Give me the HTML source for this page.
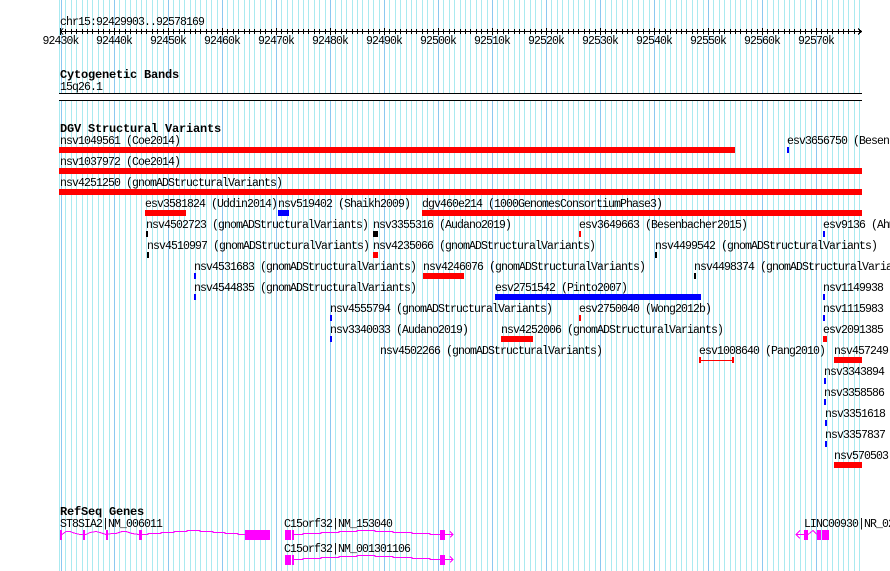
<!DOCTYPE html>
<html><head><meta charset="utf-8"><style>
html,body{margin:0;padding:0;background:#fff;width:890px;height:571px;overflow:hidden}
svg{display:block}
text{font-family:"Liberation Mono",monospace;font-size:11.5px;letter-spacing:-.9px;fill:#000;white-space:pre}
.b{font-weight:bold;font-size:12px;letter-spacing:-.2px}
.r{fill:#f00}.u{fill:#00f}.k{fill:#000}.m{fill:#f0f}
.i{fill:none;stroke:#f0f;stroke-width:1}
</style></head><body>
<svg width="890" height="571" viewBox="0 0 890 571" shape-rendering="crispEdges">
<defs>
<pattern id="g" x="60" y="0" width="54" height="10" patternUnits="userSpaceOnUse">
<rect x="0" width="1" height="10" fill="#8cc8f0"/><rect x="5" width="1" height="10" fill="#aaeaf0"/><rect x="11" width="1" height="10" fill="#aaeaf0"/><rect x="16" width="1" height="10" fill="#aaeaf0"/><rect x="22" width="1" height="10" fill="#aaeaf0"/><rect x="27" width="1" height="10" fill="#aaeaf0"/><rect x="32" width="1" height="10" fill="#aaeaf0"/><rect x="38" width="1" height="10" fill="#aaeaf0"/><rect x="43" width="1" height="10" fill="#aaeaf0"/><rect x="49" width="1" height="10" fill="#aaeaf0"/>
</pattern>
<pattern id="t" x="60" y="28" width="54" height="7" patternUnits="userSpaceOnUse">
<rect x="0" y="0" width="1" height="7" fill="#000"/><rect x="5" y="1" width="1" height="5" fill="#000"/><rect x="11" y="1" width="1" height="5" fill="#000"/><rect x="16" y="1" width="1" height="5" fill="#000"/><rect x="22" y="1" width="1" height="5" fill="#000"/><rect x="27" y="1" width="1" height="5" fill="#000"/><rect x="32" y="1" width="1" height="5" fill="#000"/><rect x="38" y="1" width="1" height="5" fill="#000"/><rect x="43" y="1" width="1" height="5" fill="#000"/><rect x="49" y="1" width="1" height="5" fill="#000"/>
</pattern>
</defs>
<rect x="60" y="0" width="801" height="94" fill="url(#g)"/>
<rect x="60" y="101" width="801" height="470" fill="url(#g)"/>
<rect x="59" y="0" width="3" height="94" fill="#fff"/><rect x="59" y="101" width="3" height="470" fill="#fff"/>
<rect x="59" y="0" width="1" height="94" fill="#aaeaf0"/><rect x="59" y="101" width="1" height="470" fill="#aaeaf0"/>
<rect x="61" y="0" width="1" height="94" fill="#8cc8f0"/><rect x="61" y="101" width="1" height="470" fill="#8cc8f0"/>

<text x="60" y="25">chr15:92429903..92578169</text>
<rect x="60" y="31" width="801" height="1" class="k"/>
<rect x="60" y="28" width="800" height="7" fill="url(#t)"/>
<polyline points="63,28.5 60.5,31.5 63,34.5" fill="none" stroke="#000"/>
<polyline points="858,28.5 861.5,31.5 858,34.5" fill="none" stroke="#000"/>
<text x="42.5" y="44">92430k</text><text x="96" y="44">92440k</text><text x="150" y="44">92450k</text><text x="204" y="44">92460k</text><text x="258" y="44">92470k</text><text x="312" y="44">92480k</text><text x="366" y="44">92490k</text><text x="420" y="44">92500k</text><text x="474" y="44">92510k</text><text x="528" y="44">92520k</text><text x="582" y="44">92530k</text><text x="636" y="44">92540k</text><text x="690" y="44">92550k</text><text x="744" y="44">92560k</text><text x="798" y="44">92570k</text>

<text class="b" x="60" y="78">Cytogenetic Bands</text>
<text x="60" y="90">15q26.1</text>
<rect x="59" y="93" width="803" height="1" class="k"/>
<rect x="59" y="100" width="803" height="1" class="k"/>

<text class="b" x="60" y="132">DGV Structural Variants</text>
<text x="60" y="144">nsv1049561 (Coe2014)</text><rect x="59" y="147" width="676" height="6" class="r"/>
<text x="787" y="144">esv3656750 (Besenbacher2015)</text><rect x="787" y="147" width="2" height="6" class="u"/>
<text x="60" y="165">nsv1037972 (Coe2014)</text><rect x="59" y="168" width="803" height="6" class="r"/>
<text x="60" y="186">nsv4251250 (gnomADStructuralVariants)</text><rect x="59" y="189" width="803" height="6" class="r"/>

<text x="145" y="207">esv3581824 (Uddin2014)</text><rect x="145" y="210" width="41" height="6" class="r"/>
<text x="278" y="207">nsv519402 (Shaikh2009)</text><rect x="278" y="210" width="11" height="6" class="u"/>
<text x="422" y="207">dgv460e214 (1000GenomesConsortiumPhase3)</text><rect x="422" y="210" width="440" height="6" class="r"/>

<text x="146" y="228">nsv4502723 (gnomADStructuralVariants)</text><rect x="146" y="231" width="2" height="6" class="k"/>
<text x="373" y="228">nsv3355316 (Audano2019)</text><rect x="373" y="231" width="5" height="6" class="k"/>
<text x="579" y="228">esv3649663 (Besenbacher2015)</text><rect x="579" y="231" width="2" height="6" class="r"/>
<text x="823" y="228">esv9136 (Ahmed2013)</text><rect x="823" y="231" width="2" height="6" class="u"/>

<text x="147" y="249">nsv4510997 (gnomADStructuralVariants)</text><rect x="147" y="252" width="2" height="6" class="k"/>
<text x="373" y="249">nsv4235066 (gnomADStructuralVariants)</text><rect x="373" y="252" width="5" height="6" class="r"/>
<text x="655" y="249">nsv4499542 (gnomADStructuralVariants)</text><rect x="655" y="252" width="2" height="6" class="k"/>

<text x="194" y="270">nsv4531683 (gnomADStructuralVariants)</text><rect x="194" y="273" width="2" height="6" class="u"/>
<text x="423" y="270">nsv4246076 (gnomADStructuralVariants)</text><rect x="423" y="273" width="41" height="6" class="r"/>
<text x="694" y="270">nsv4498374 (gnomADStructuralVariants)</text><rect x="694" y="273" width="2" height="6" class="k"/>

<text x="194" y="291">nsv4544835 (gnomADStructuralVariants)</text><rect x="194" y="294" width="2" height="6" class="u"/>
<text x="495" y="291">esv2751542 (Pinto2007)</text><rect x="495" y="294" width="206" height="6" class="u"/>
<text x="823" y="291">nsv1149938</text><rect x="823" y="294" width="2" height="6" class="u"/>

<text x="330" y="312">nsv4555794 (gnomADStructuralVariants)</text><rect x="330" y="315" width="2" height="6" class="u"/>
<text x="579" y="312">esv2750040 (Wong2012b)</text><rect x="579" y="315" width="2" height="6" class="r"/>
<text x="823" y="312">nsv1115983</text><rect x="823" y="315" width="2" height="6" class="u"/>

<text x="330" y="333">nsv3340033 (Audano2019)</text><rect x="330" y="336" width="2" height="6" class="u"/>
<text x="501" y="333">nsv4252006 (gnomADStructuralVariants)</text><rect x="501" y="336" width="32" height="6" class="r"/>
<text x="823" y="333">esv2091385</text><rect x="823" y="336" width="4" height="6" class="r"/>

<text x="380" y="354">nsv4502266 (gnomADStructuralVariants)</text>
<text x="699" y="354">esv1008640 (Pang2010)</text><rect x="699" y="357" width="2" height="6" class="r"/><rect x="732" y="357" width="2" height="6" class="r"/><rect x="699" y="360" width="35" height="1" class="r"/>
<text x="834" y="354">nsv457249</text><rect x="834" y="357" width="28" height="6" class="r"/>
<text x="824" y="375">nsv3343894</text><rect x="824" y="378" width="2" height="6" class="u"/>
<text x="824" y="396">nsv3358586</text><rect x="824" y="399" width="2" height="6" class="u"/>
<text x="825" y="417">nsv3351618</text><rect x="825" y="420" width="2" height="6" class="u"/>
<text x="825" y="438">nsv3357837</text><rect x="825" y="441" width="2" height="6" class="u"/>
<text x="834" y="459">nsv570503</text><rect x="834" y="462" width="28" height="6" class="r"/>

<text class="b" x="60" y="515">RefSeq Genes</text>
<text x="60" y="527">ST8SIA2|NM_006011</text>
<path class="i" d="M60 534.5H62L66 531.5H70L74 533L80 534.5H86L90 532.5L96 531.5L100 532.5L106 534.5L112 533.5H116L122 531.5H126L132 533.5L139 534.5H148V533.5H161V532.5H174V531.5H187V530.5H200V531.5H213V532.5H225V533.5H238V534.5H245"/>
<rect x="60" y="530" width="2" height="10" class="m"/><rect x="83" y="530" width="2" height="10" class="m"/><rect x="106" y="530" width="2" height="10" class="m"/><rect x="139" y="530" width="3" height="10" class="m"/><rect x="245" y="530" width="25" height="10" class="m"/>

<text x="284" y="527">C15orf32|NM_153040</text>
<rect x="285" y="530" width="6" height="10" class="m"/><rect x="292" y="530" width="2" height="10" class="m"/><rect x="440" y="530" width="5" height="10" class="m"/>
<path class="i" d="M294 534.5H303V533.5H321V532.5H339V531.5H357V530.5H375V531.5H393V532.5H412V533.5H430V534.5H453M450 531.5L453 534.5L450 537.5"/>

<text x="284" y="552">C15orf32|NM_001301106</text>
<rect x="285" y="555" width="6" height="10" class="m"/><rect x="292" y="555" width="2" height="10" class="m"/><rect x="440" y="555" width="5" height="10" class="m"/>
<path class="i" d="M294 559.5H303V558.5H321V557.5H339V556.5H357V555.5H375V556.5H393V557.5H412V558.5H430V559.5H453M450 556.5L453 559.5L450 562.5"/>

<text x="804" y="527">LINC00930|NR_024</text>
<path class="i" d="M796 534.5H804M800 530.5L796 534.5L800 538.5M808 534.5L813 530.5L817 534.5"/>
<rect x="804" y="530" width="4" height="10" class="m"/><rect x="817" y="530" width="4" height="10" class="m"/><rect x="822" y="530" width="7" height="10" class="m"/>
</svg>
</body></html>
